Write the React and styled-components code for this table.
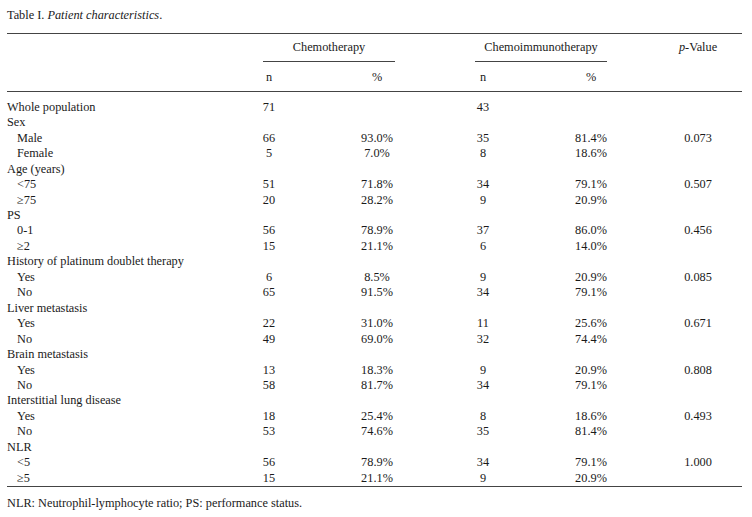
import React from "react";
import styled, { createGlobalStyle } from "styled-components";

const GlobalStyle = createGlobalStyle`
  html, body {
    margin: 0;
    padding: 0;
    background: #ffffff;
  }
  body {
    font-family: "Liberation Serif", "Times New Roman", serif;
    font-size: 12.3px;
    line-height: 15.46px;
    color: #1a1a1a;
  }
`;

const COLS = "256px 12px 120px 80px 16px 116px 135px";

const rows = [
  { label: "Whole population", n1: "71", n2: "43" },
  { label: "Sex" },
  { label: "Male", sub: true, n1: "66", p1: "93.0%", n2: "35", p2: "81.4%", pv: "0.073" },
  { label: "Female", sub: true, n1: "5", p1: "7.0%", n2: "8", p2: "18.6%" },
  { label: "Age (years)" },
  { label: "<75", sub: true, n1: "51", p1: "71.8%", n2: "34", p2: "79.1%", pv: "0.507" },
  { label: "≥75", sub: true, n1: "20", p1: "28.2%", n2: "9", p2: "20.9%" },
  { label: "PS" },
  { label: "0-1", sub: true, n1: "56", p1: "78.9%", n2: "37", p2: "86.0%", pv: "0.456" },
  { label: "≥2", sub: true, n1: "15", p1: "21.1%", n2: "6", p2: "14.0%" },
  { label: "History of platinum doublet therapy" },
  { label: "Yes", sub: true, n1: "6", p1: "8.5%", n2: "9", p2: "20.9%", pv: "0.085" },
  { label: "No", sub: true, n1: "65", p1: "91.5%", n2: "34", p2: "79.1%" },
  { label: "Liver metastasis" },
  { label: "Yes", sub: true, n1: "22", p1: "31.0%", n2: "11", p2: "25.6%", pv: "0.671" },
  { label: "No", sub: true, n1: "49", p1: "69.0%", n2: "32", p2: "74.4%" },
  { label: "Brain metastasis" },
  { label: "Yes", sub: true, n1: "13", p1: "18.3%", n2: "9", p2: "20.9%", pv: "0.808" },
  { label: "No", sub: true, n1: "58", p1: "81.7%", n2: "34", p2: "79.1%" },
  { label: "Interstitial lung disease" },
  { label: "Yes", sub: true, n1: "18", p1: "25.4%", n2: "8", p2: "18.6%", pv: "0.493" },
  { label: "No", sub: true, n1: "53", p1: "74.6%", n2: "35", p2: "81.4%" },
  { label: "NLR" },
  { label: "<5", sub: true, n1: "56", p1: "78.9%", n2: "34", p2: "79.1%", pv: "1.000" },
  { label: "≥5", sub: true, n1: "15", p1: "21.1%", n2: "9", p2: "20.9%" },
];

const App = () => {
  return (
    <>
      <GlobalStyle />
      <Page>
        <Caption>
          Table I. <em>Patient characteristics</em>.
        </Caption>
        <Table>
          <HeadTop>
            <Group $col="2 / 4">Chemotherapy</Group>
            <Group $col="5 / 7">Chemoimmunotherapy</Group>
            <PHead>
              <em>p</em>-Value
            </PHead>
          </HeadTop>
          <HeadSub>
            <Count $col="2">n</Count>
            <Pct $col="3">%</Pct>
            <Count $col="5">n</Count>
            <Pct $col="6">%</Pct>
          </HeadSub>
          <Body>
            {rows.map((r, i) => (
              <Row key={i}>
                <Label $sub={r.sub}>{r.label}</Label>
                <Count $col="2">{r.n1}</Count>
                <Pct $col="3">{r.p1}</Pct>
                <Count $col="5">{r.n2}</Count>
                <Pct $col="6">{r.p2}</Pct>
                <PVal>{r.pv}</PVal>
              </Row>
            ))}
          </Body>
        </Table>
        <Footnote>NLR: Neutrophil-lymphocyte ratio; PS: performance status.</Footnote>
      </Page>
    </>
  );
};

export default App;

const Page = styled.div`
  width: 735px;
  padding: 8px 0 0 7px;
`;

const Caption = styled.div`
  margin-bottom: 10px;

  > em {
    font-style: italic;
  }
`;

const Table = styled.div`
  border-top: 1px solid #444;
  border-bottom: 1px solid #444;
`;

const GridRow = styled.div`
  display: grid;
  grid-template-columns: ${COLS};
`;

const HeadTop = styled(GridRow)``;

const Group = styled.div`
  grid-column: ${(p) => p.$col};
  text-align: center;
  padding: 6px 0 5.5px;
  border-bottom: 1px solid #444;
`;

const PHead = styled.div`
  grid-column: 7;
  display: flex;
  justify-content: center;
  padding: 6px 0 0 47px;

  > em {
    font-style: italic;
  }
`;

const HeadSub = styled(GridRow)`
  padding: 8px 0 5.5px;
  border-bottom: 1px solid #444;
`;

const Body = styled.div`
  padding: 7.5px 0 0;
`;

const Row = styled(GridRow)``;

const Label = styled.div`
  grid-column: 1;
  padding-left: ${(p) => (p.$sub ? "10px" : "0")};
  white-space: nowrap;
`;

const Count = styled.div`
  grid-column: ${(p) => p.$col};
  display: flex;
  justify-content: center;
  white-space: nowrap;
`;

const Pct = styled.div`
  grid-column: ${(p) => p.$col};
  display: flex;
  justify-content: center;
  padding-left: 84px;
  white-space: nowrap;
`;

const PVal = styled.div`
  grid-column: 7;
  display: flex;
  justify-content: center;
  padding-left: 47px;
  white-space: nowrap;
`;

const Footnote = styled.div`
  margin-top: 8.5px;
`;
